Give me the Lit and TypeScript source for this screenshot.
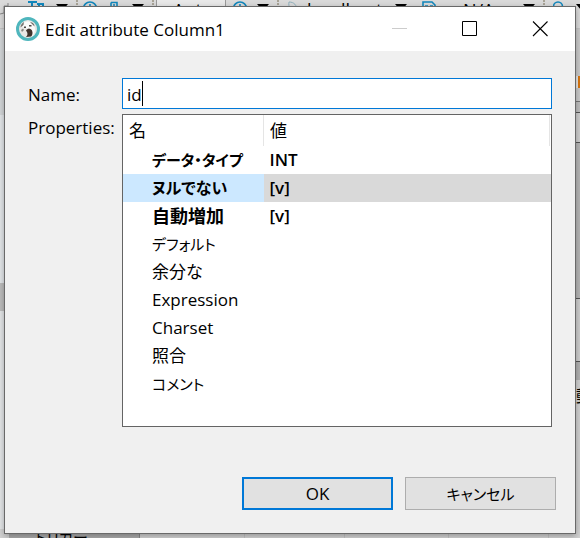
import { LitElement, html, css } from "lit";
import { customElement, property, state } from "lit/decorators.js";
import { classMap } from "lit/directives/class-map.js";

const caret = html`<svg class="caret" viewBox="0 0 12 8"><path d="M0 0H12L6 7Z" fill="#000" /></svg>`;
const clock = html`<svg class="glyph" viewBox="0 0 16 16">
  <circle cx="7" cy="7.500" r="6.500" fill="none" stroke="#1187bd" stroke-width="1.600" />
  <path d="M7 3V10H11" fill="none" stroke="#1187bd" stroke-width="1.600" />
</svg>`;

/** The application window behind the dialog: toolbar and panel edges. */
@customElement("app-backdrop")
export class AppBackdrop extends LitElement {
  static styles = css`
    :host {
      display: grid;
      grid-template-rows: auto 1fr auto;
      overflow: hidden;
      background: #e6e6e6;
      color: #000;
      font: 18px/20px "Open Sans", "Noto Sans CJK JP", sans-serif;
    }
    .toolbar {
      display: grid;
      grid-template-columns: 28px 28px 20px 7px 27px 22px 20px 4px 77px 24px 20px 11px 19px 88px 27px 26px 75px 20px 10px 23px 12px;
      height: 28px;
      overflow: hidden;
      background: #dadada;
      border-bottom: 1px solid #c4c4c4;
      white-space: nowrap;
    }
    .caret {
      width: 12px;
      height: 8px;
      margin-top: 4px;
    }
    .glyph {
      width: 16px;
      height: 16px;
      margin-top: 1px;
    }
    .grip {
      height: 16px;
      border-left: 2px dotted #a8a396;
    }
    .combo {
      width: 52px;
      height: 20px;
      padding-left: 16px;
      background: #e9e9e9;
      border-left: 1px solid #999;
      border-right: 1px solid #999;
    }
    .sides {
      display: flex;
      justify-content: space-between;
    }
    .left,
    .right {
      display: flex;
      flex-direction: column;
    }
    .left {
      width: 8px;
    }
    .right {
      width: 6px;
    }
    .l1 { height: 86px; background: #d3d6d8; }
    .l2 { height: 168px; background: #e2e5e8; }
    .l3 { height: 28px; background: #bcbcbc; }
    .l4 { flex: 1; background: #e3e5e7; }
    .r1 { height: 47px; background: #c9c9c9; }
    .r2 { height: 12px; margin-left: 4px; background: #d9760f; }
    .r3 { height: 13px; border-bottom: 1px solid #777; background: #c9c9c9; }
    .r4 { height: 10px; border-bottom: 1px solid #555; background: #bdbdbd; }
    .r5 { height: 29px; border-bottom: 1px solid #555; background: #cccccc; }
    .r6 { height: 155px; border-bottom: 1px solid #555; background: #b5b5b5; }
    .r7 { height: 62px; border-bottom: 1px solid #555; background: #cccccc; }
    .r8 { height: 18px; background: #b0b0b0; }
    .r9 {
      height: 28px;
      padding-left: 2px;
      font-size: 16px;
      line-height: 32px;
      background: #d0d0d0;
      overflow: hidden;
    }
    .r10 { flex: 1; background: #d0d0d0; }
    .footer {
      display: grid;
      grid-template-columns: 140px 100px 100px 104px 100px 1fr;
      height: 9px;
      padding-left: 5px;
      overflow: hidden;
      background: #d2d2d2;
    }
    .cell {
      border-right: 1px solid #c2c2c2;
    }
    .tree {
      width: 104px;
      margin-left: 4px;
      padding-left: 26px;
      background: #ababab;
      border-right: 1px solid #888;
      font-size: 15px;
      line-height: 16px;
      overflow: hidden;
      font-feature-settings: "palt";
    }
  `;

  render() {
    return html`
      <div class="toolbar">
        <svg class="glyph" viewBox="0 0 16 16">
          <path d="M0 13L4 12V5H8V2" fill="none" stroke="#888" />
        </svg>
        <svg class="glyph" viewBox="0 0 16 16">
          <path d="M0 1H9M4 2V14M9 3H16M11 3V14M15 3V8" fill="none" stroke="#1187bd" stroke-width="2" />
        </svg>
        ${caret}<span class="grip"></span>${clock}
        <svg class="glyph" viewBox="0 0 16 16">
          <path d="M1 1.500H7V14M1 1.500V14M3 4H5" fill="none" stroke="#1187bd" stroke-width="1.600" />
        </svg>
        ${caret}<span class="grip"></span>
        <span class="combo">Auto</span>
        ${clock}${caret}<span class="grip"></span>
        <svg class="glyph" viewBox="0 0 16 16">
          <path d="M1 1C6 1 9 4 9 10M1 1C0 6 3 10 8 12" fill="none" stroke="#8fb0bd" />
        </svg>
        <span>localhost</span>${caret}
        <svg class="glyph" viewBox="0 0 16 16">
          <path d="M1 14V1H10L13 4V14M3 5H6M8 5H11" fill="none" stroke="#1187bd" stroke-width="1.600" />
        </svg>
        <span>&lt; N/A &gt;</span>${caret}<span class="grip"></span>
        <svg class="glyph" viewBox="0 0 16 16">
          <circle cx="5" cy="5.500" r="4.500" fill="none" stroke="#1187bd" stroke-width="1.600" />
        </svg>
        ${caret}
      </div>
      <div class="sides">
        <div class="left">
          <div class="l1"></div><div class="l2"></div><div class="l3"></div><div class="l4"></div>
        </div>
        <div class="right">
          <div class="r1"></div><div class="r2"></div><div class="r3"></div><div class="r4"></div>
          <div class="r5"></div><div class="r6"></div><div class="r7"></div><div class="r8"></div>
          <div class="r9">動</div><div class="r10"></div>
        </div>
      </div>
      <div class="footer">
        <div class="tree">トリガー</div>
        <div class="cell"></div><div class="cell"></div><div class="cell"></div><div class="cell"></div>
      </div>
    `;
  }
}

interface Property {
  name: string;
  value: string;
  strong?: boolean;
  script?: "katakana" | "kana" | "kanji";
}

@customElement("attribute-dialog")
export class AttributeDialog extends LitElement {
  static styles = css`
    :host {
      display: flex;
      flex-direction: column;
      box-sizing: border-box;
      border: 1px solid #696969;
      background: #f0f0f0;
      box-shadow: 0 2px 6px rgba(0, 0, 0, 0.3);
      color: #000;
      font: 17px/28px "Open Sans", "Noto Sans CJK JP", sans-serif;
      font-feature-settings: "palt";
    }
    .titlebar {
      display: flex;
      align-items: center;
      height: 44px;
      padding-left: 11px;
      background: #fff;
    }
    .logo {
      width: 24px;
      height: 24px;
    }
    .title {
      flex: 1;
      margin: 0 0 0 5px;
      padding-top: 1px;
      font: inherit;
    }
    .control {
      display: grid;
      place-items: center;
      width: 70px;
      height: 44px;
      padding: 0;
      border: 0;
      background: none;
    }
    .control svg {
      width: 16px;
      height: 16px;
    }
    .form {
      flex: 1;
      display: grid;
      grid-template-columns: 94px 1fr;
      grid-template-rows: 31px 313px;
      row-gap: 5px;
      padding: 27px 23px 0 23px;
    }
    .label {
      padding-top: 3px;
      white-space: nowrap;
    }
    .label.top {
      padding-top: 0;
    }
    .entry {
      position: relative;
    }
    .field {
      box-sizing: border-box;
      width: 100%;
      height: 31px;
      padding: 2px 4px 0;
      border: 1px solid #0078d7;
      border-radius: 0;
      outline: none;
      background: #fff;
      color: #000;
      caret-color: transparent;
      font: inherit;
    }
    .cursor {
      position: absolute;
      top: 3px;
      left: 20px;
      width: 1px;
      height: 25px;
      background: #000;
    }
    .list {
      box-sizing: border-box;
      border: 1px solid #646464;
      background: #fff;
      overflow: hidden;
    }
    table {
      width: 100%;
      border-collapse: collapse;
      table-layout: fixed;
    }
    th,
    td {
      height: 28px;
      padding: 0 6px;
      text-align: left;
      font-weight: 400;
      white-space: nowrap;
    }
    th:first-child {
      width: 128px;
    }
    thead th {
      height: 31px;
      border-right: 1px solid #e5e5e5;
    }
    tbody th {
      padding: 0 0 0 29px;
    }
    .strong th,
    .strong td {
      font-weight: 600;
    }
    .katakana {
      font-size: 15px;
    }
    .kana {
      font-size: 16px;
    }
    .kanji {
      font-size: 18px;
    }
    .selected th {
      background: #cce8ff;
    }
    .selected td {
      background: #d9d9d9;
    }
    .spacer {
      width: 1px;
      padding: 0;
    }
    .actions {
      display: flex;
      justify-content: flex-end;
      gap: 12px;
      padding: 0 19px 23px;
    }
    .action {
      width: 151px;
      height: 33px;
      padding: 0;
      border: 1px solid #adadad;
      border-radius: 0;
      background: #e1e1e1;
      color: #000;
      font-family: inherit;
      font-size: 17px;
      font-feature-settings: inherit;
    }
    .action.katakana {
      font-size: 15px;
    }
    .action.default {
      border: 2px solid #0078d7;
    }
  `;

  @property({ attribute: false }) properties: Property[] = [];
  @state() private selected = 1;

  render() {
    return html`
      <header class="titlebar">
        <svg class="logo" viewBox="0 0 24 24" aria-hidden="true">
          <circle cx="12" cy="12" r="10.500" fill="#e9e7e5" stroke="#4fb6bd" stroke-width="3" />
          <path d="M5 10C6 6 9 4.500 12.500 4.500C17 5 19 8 19 12C19 16 17 19 15.500 19.500C16.500 15 15 12 13 11C10 12 8 11 7 9.500Z" fill="#fbfbfa" />
          <path d="M4.500 10.500C4.500 8 6 6 8 5L7.500 8Z" fill="#77736f" />
          <path d="M5 13L7 11.500L8 13L6 15Z" fill="#8a8783" />
          <path d="M10 13.500C11.500 11 15 11.500 16 13.500C17 16 16.500 18.500 15 19.500L10 20C12 18 12 16 10 13.500Z" fill="#40322c" />
          <path d="M8 9.500H10V11H8ZM13 8H15.500V9.500H13Z" fill="#4b4845" />
          <path d="M14 5C17 5.500 18.500 7 18.500 9.500L16.500 7.500Z" fill="#6b6966" />
        </svg>
        <h1 class="title">Edit attribute Column1</h1>
        <button class="control" aria-label="Minimize" disabled>
          <svg viewBox="0 0 16 16"><path d="M0 7.500H15" stroke="#ccc" /></svg>
        </button>
        <button class="control" aria-label="Maximize">
          <svg viewBox="0 0 16 16"><path d="M.5.5H14.500V14.500H.5Z" fill="none" stroke="#000" /></svg>
        </button>
        <button class="control" aria-label="Close">
          <svg viewBox="0 0 16 16"><path d="M1 .5L15.500 15M15.500 .5L1 15" stroke="#000" stroke-width="1.100" /></svg>
        </button>
      </header>
      <div class="form">
        <label class="label" for="name">Name:</label>
        <div class="entry">
          <input class="field" id="name" type="text" .value=${"id"} />
          <span class="cursor"></span>
        </div>
        <span class="label top" id="props">Properties:</span>
        <div class="list">
          <table aria-labelledby="props">
            <thead>
              <tr><th>名</th><th>値</th><td class="spacer"></td></tr>
            </thead>
            <tbody>
              ${this.properties.map(
                (p, i) => html`<tr
                  class=${classMap({ strong: !!p.strong, selected: i === this.selected })}
                  @click=${() => (this.selected = i)}
                >
                  <th scope="row" class=${p.script ?? ""}>${p.name}</th>
                  <td colspan="2">${p.value}</td>
                </tr>`
              )}
            </tbody>
          </table>
        </div>
      </div>
      <footer class="actions">
        <button class="action default">OK</button>
        <button class="action katakana">キャンセル</button>
      </footer>
    `;
  }
}

@customElement("app-root")
export class AppRoot extends LitElement {
  static styles = css`
    :host {
      position: relative;
      display: flex;
      flex-direction: column;
      box-sizing: border-box;
      min-height: 100vh;
      padding: 6px 4px 4px;
      overflow: hidden;
    }
    app-backdrop {
      position: absolute;
      inset: 0;
    }
    attribute-dialog {
      position: relative;
      flex: 1;
    }
  `;

  private properties: Property[] = [
    { name: "データ・タイプ", value: "INT", strong: true, script: "katakana" },
    { name: "ヌルでない", value: "[v]", strong: true, script: "kana" },
    { name: "自動増加", value: "[v]", strong: true, script: "kanji" },
    { name: "デフォルト", value: "", script: "katakana" },
    { name: "余分な", value: "" },
    { name: "Expression", value: "" },
    { name: "Charset", value: "" },
    { name: "照合", value: "" },
    { name: "コメント", value: "", script: "katakana" },
  ];

  render() {
    return html`
      <app-backdrop aria-hidden="true"></app-backdrop>
      <attribute-dialog role="dialog" aria-label="Edit attribute Column1" .properties=${this.properties}></attribute-dialog>
    `;
  }
}
